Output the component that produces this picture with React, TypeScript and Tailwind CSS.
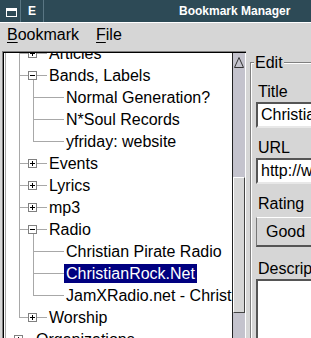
import React from 'react';

type Guide = [number, 'full' | 'top' | 'bottom'];

type Row = {
  label: string;
  level: 0 | 1 | 2;
  box?: '+' | '-';
  selected?: boolean;
  guides: Guide[];
};

// x positions on the page (tree interior starts at x = 4)
const GUIDE = [5, 19, 33];
const TEXT_X = [34, 47, 64];
const LINE = '#a8a8a8';
const MID = 10;

const L1: Guide[] = [[5, 'full'], [19, 'full']];

const rows: Row[] = [
  { label: 'Articles', level: 1, box: '+', guides: L1 },
  { label: 'Bands, Labels', level: 1, box: '-', guides: [...L1, [33, 'bottom']] },
  { label: 'Normal Generation?', level: 2, guides: [...L1, [33, 'full']] },
  { label: 'N*Soul Records', level: 2, guides: [...L1, [33, 'full']] },
  { label: 'yfriday: website', level: 2, guides: [...L1, [33, 'top']] },
  { label: 'Events', level: 1, box: '+', guides: L1 },
  { label: 'Lyrics', level: 1, box: '+', guides: L1 },
  { label: 'mp3', level: 1, box: '+', guides: L1 },
  { label: 'Radio', level: 1, box: '-', guides: [...L1, [33, 'bottom']] },
  { label: 'Christian Pirate Radio', level: 2, guides: [...L1, [33, 'full']] },
  { label: 'ChristianRock.Net', level: 2, selected: true, guides: [...L1, [33, 'full']] },
  { label: 'JamXRadio.net - Christian Rock', level: 2, guides: [...L1, [33, 'top']] },
  { label: 'Worship', level: 1, box: '+', guides: [[5, 'full'], [19, 'top']] },
  { label: 'Organizations', level: 0, box: '+', guides: [[5, 'full']] },
];

function Connector({ row }: { row: Row }) {
  const w = TEXT_X[row.level] - 4;
  const gx = GUIDE[row.level];
  const bx = gx + 13;
  return (
    <svg width={w} height={22} viewBox={`4 0 ${w} 22`} className="shrink-0">
      {row.guides.map(([x, kind]) => {
        const y0 = kind === 'bottom' ? MID + 5 : 0;
        const y1 = kind === 'top' ? MID + 1 : 22;
        return <rect key={x} x={x} y={y0} width={1} height={y1 - y0} fill={LINE} />;
      })}
      <rect x={gx} y={MID} width={TEXT_X[row.level] - gx} height={1} fill={LINE} />
      {row.box && (
        <g>
          <rect x={bx - 3.5} y={MID - 3.5} width={8} height={8} fill="#fff" stroke="#808080" />
          <rect x={bx - 2} y={MID} width={5} height={1} fill="#000" />
          {row.box === '+' && <rect x={bx} y={MID - 2} width={1} height={5} fill="#000" />}
        </g>
      )}
    </svg>
  );
}

function Field({ value }: { value: string }) {
  return (
    <div className="h-[26px] w-[300px] overflow-hidden whitespace-nowrap border-2 border-t-[#555] border-l-[#555] border-b-[#e8e8e8] border-r-[#e8e8e8] bg-white pl-[3px] leading-[22px]">
      {value}
    </div>
  );
}

export default function App() {
  return (
    <div className="flex h-[338px] w-[311px] flex-col overflow-hidden bg-[#d6d6d6] font-['Liberation_Sans',Arial,sans-serif] text-[16px] text-black select-none">
      {/* title bar */}
      <div className="flex h-[22px] shrink-0 bg-[#2d4a56]">
        <div className="w-[21px] border-r border-[#5a7683] pl-[6px] pt-[8px]">
          <svg width="11" height="9" className="block">
            <rect x="0.5" y="0.5" width="10" height="8" fill="none" stroke="#fff" />
            <rect x="0" y="0" width="11" height="3" fill="#fff" />
          </svg>
        </div>
        <div className="flex w-[23px] items-center justify-center border-r border-[#5a7683] text-[12px] font-bold text-white">
          E
        </div>
        <div className="flex-1 whitespace-nowrap pl-[135px] text-[12px] font-bold leading-[22px] text-white">
          Bookmark Manager
        </div>
      </div>

      {/* menu bar */}
      <div className="flex h-[29px] shrink-0 items-start border-t border-white pt-[1px] leading-[22px]">
        <span className="pl-[7px]">
          <span className="underline underline-offset-[2px]">B</span>ookmark
        </span>
        <span className="ml-[17px]">
          <span className="underline underline-offset-[2px]">F</span>ile
        </span>
      </div>

      <div className="flex min-h-0 flex-1">
        {/* tree with scrollbar */}
        <div className="ml-[2px] w-[244px] shrink-0 border-l border-t border-[#808080]">
          <div className="flex h-full border-l border-t border-black">
            <div className="w-[228px] shrink-0 overflow-hidden bg-white">
              <div className="-mt-[10px]">
                {rows.map((row) => (
                  <div key={row.label} className="flex h-[22px] items-start">
                    <Connector row={row} />
                    <span
                      className={`mt-[1px] h-[19px] whitespace-nowrap px-[2px] leading-[19px] ${
                        row.selected ? 'bg-[#000080] text-white' : ''
                      }`}
                    >
                      {row.label}
                    </span>
                  </div>
                ))}
              </div>
            </div>
            <div className="flex w-[14px] shrink-0 flex-col border-l border-r border-l-[#222] border-r-white bg-[#c4c3cd]">
              <svg width="12" height="16" className="block shrink-0">
                <polygon points="1.5,14.5 6,4.5 10.5,14.5" fill="none" stroke="#333" />
              </svg>
              <div className="mt-[108px] h-[136px] border border-t-white border-l-white border-r-[#444] border-b-[#444] bg-[#d6d6d6]" />
            </div>
          </div>
        </div>

        {/* edit panel */}
        <div className="min-w-0 flex-1 overflow-hidden pl-[4px] pt-[11px]">
          <div className="relative w-[300px] border-l border-t border-[#808080]">
            <span className="absolute left-[3px] top-[-10px] bg-[#d6d6d6] px-[1px] leading-[20px]">Edit</span>
            <div className="flex flex-col border-l border-t border-white pl-[4px] pt-[18px]">
              <div className="h-[20px] pl-[2px] leading-[20px]">Title</div>
              <Field value="ChristianRock.Net" />
              <div className="mt-[10px] h-[20px] pl-[2px] leading-[20px]">URL</div>
              <Field value="http://www.christianrock.net/" />
              <div className="mt-[10px] h-[20px] pl-[2px] leading-[20px]">Rating</div>
              <div className="mt-[3px] h-[30px] w-[300px] border-b-2 border-l border-t border-b-[#555] border-l-[#777] border-t-white bg-[#d6d6d6] pl-[9px] leading-[27px]">
                Good
              </div>
              <div className="mt-[12px] h-[20px] pl-[2px] leading-[20px]">Description</div>
              <div className="h-[80px] w-[300px] border-2 border-t-[#555] border-l-[#555] bg-white" />
            </div>
          </div>
        </div>
      </div>
    </div>
  );
}
